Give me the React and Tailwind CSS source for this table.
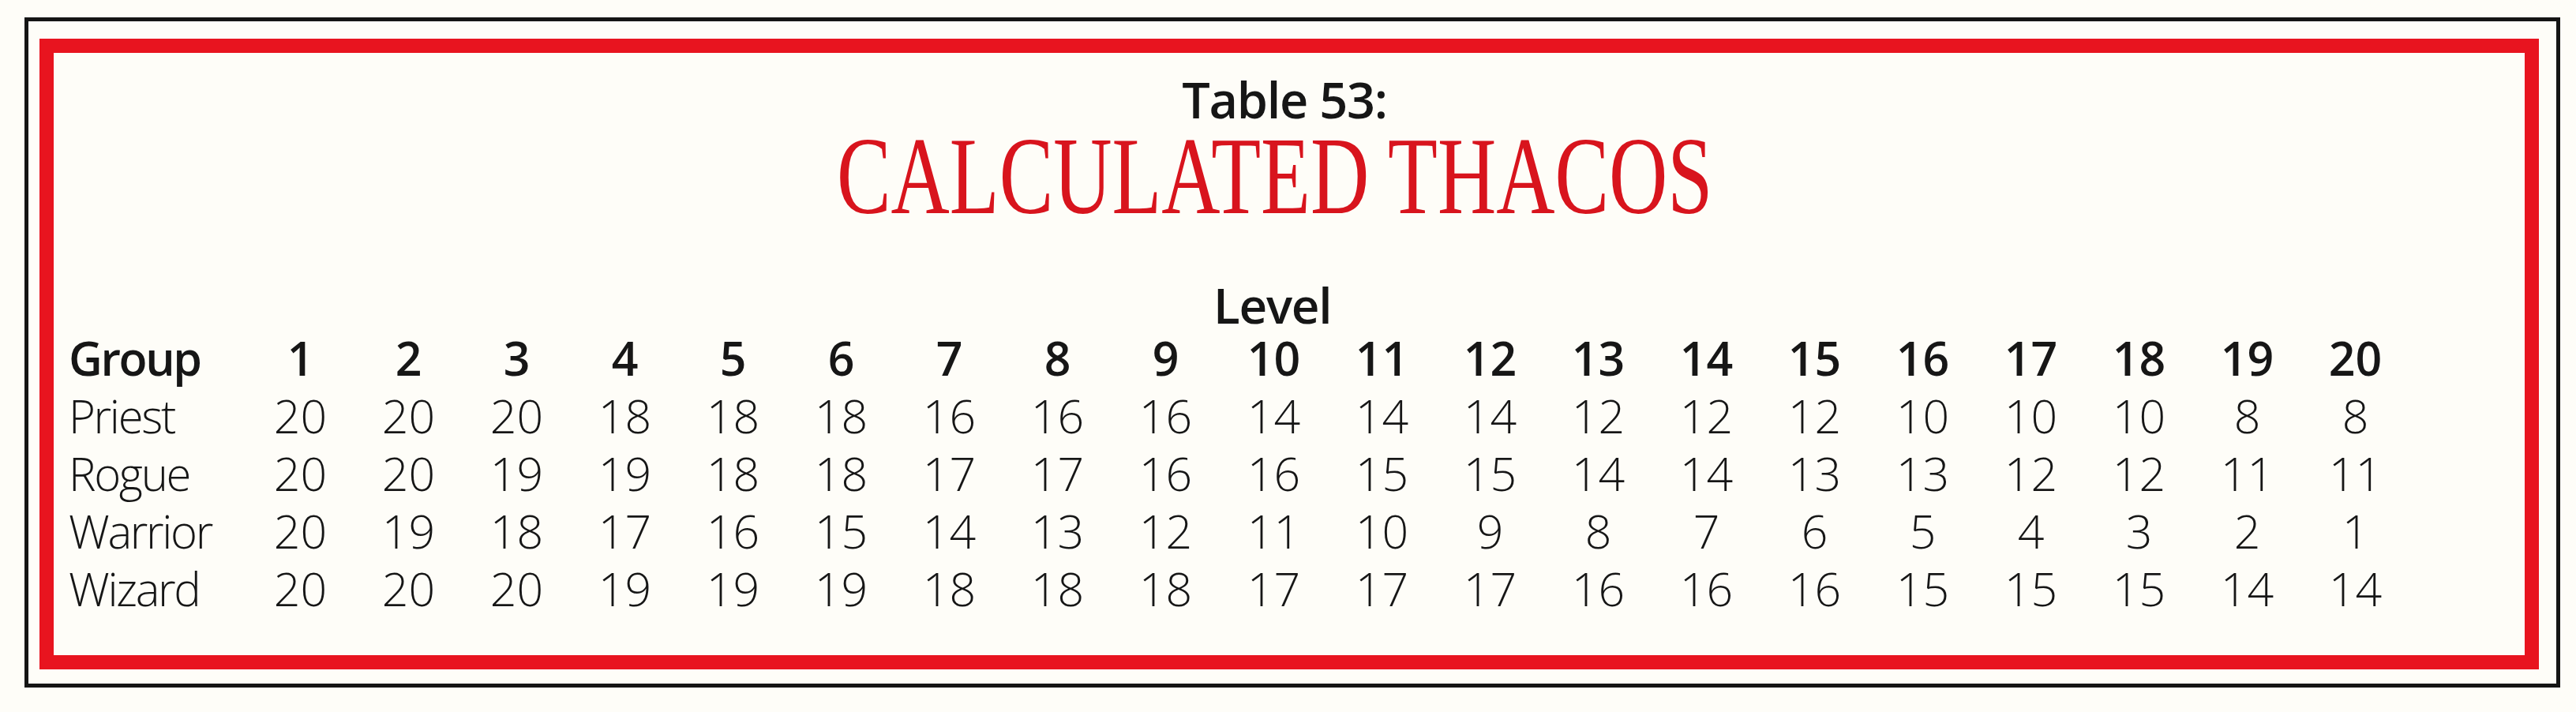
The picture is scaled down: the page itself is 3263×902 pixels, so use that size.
import React from 'react';

const levels = Array.from({ length: 20 }, (_, i) => i + 1);

const rows = [
    { group: 'Priest', values: [20, 20, 20, 18, 18, 18, 16, 16, 16, 14, 14, 14, 12, 12, 12, 10, 10, 10, 8, 8] },
    { group: 'Rogue', values: [20, 20, 19, 19, 18, 18, 17, 17, 16, 16, 15, 15, 14, 14, 13, 13, 12, 12, 11, 11] },
    { group: 'Warrior', values: [20, 19, 18, 17, 16, 15, 14, 13, 12, 11, 10, 9, 8, 7, 6, 5, 4, 3, 2, 1] },
    { group: 'Wizard', values: [20, 20, 20, 19, 19, 19, 18, 18, 18, 17, 17, 17, 16, 16, 16, 15, 15, 15, 14, 14] },
];

const App = () => {
    return (
        <div className="w-[3263px] h-[902px] overflow-hidden bg-[#fefdf8] pl-[31px] pt-[22px] font-['Open_Sans',sans-serif] text-[#161616]">
            {/* Outer black frame */}
            <div className="w-[3212px] h-[849px] border-[5px] border-[#151515] pl-[14px] pt-[22px]">
                {/* Red frame */}
                <div className="w-[3166px] h-[799px] border-[18px] border-[#e8141f] pt-[27px]">
                    <div className="flex flex-col items-center">
                        <div className="text-[63px] leading-none font-semibold tracking-[-0.02em] -translate-x-[6px]">
                            Table 53:
                        </div>
                        <div className="-mt-[3px] text-[139px] leading-none font-['Liberation_Serif',serif] text-[#d8141d] scale-x-[0.74] -translate-x-[18px] whitespace-nowrap">
                            CALCULATED THACOS
                        </div>
                    </div>

                    {/* Table */}
                    <div className="mt-[62px] pl-[19px] grid grid-cols-[225px_repeat(20,137px)]">
                        <div className="col-start-11 col-span-1 text-center text-[62px] leading-none font-semibold tracking-[-0.02em] whitespace-nowrap -translate-x-[8px]">
                            Level
                        </div>

                        <div className="col-start-1 text-[59px] leading-[73px] font-semibold tracking-[-0.04em]">
                            Group
                        </div>
                        {levels.map((level) => (
                            <div key={level} className="text-center text-[59px] leading-[73px] font-semibold">
                                {level}
                            </div>
                        ))}

                        {rows.map((row) => (
                            <React.Fragment key={row.group}>
                                <div className="col-start-1 text-[58px] leading-[73px] font-light tracking-[-0.04em]">
                                    {row.group}
                                </div>
                                {row.values.map((value, i) => (
                                    <div key={i} className="text-center text-[59px] leading-[73px] font-light">
                                        {value}
                                    </div>
                                ))}
                            </React.Fragment>
                        ))}
                    </div>
                </div>
            </div>
        </div>
    );
};

export default App;
